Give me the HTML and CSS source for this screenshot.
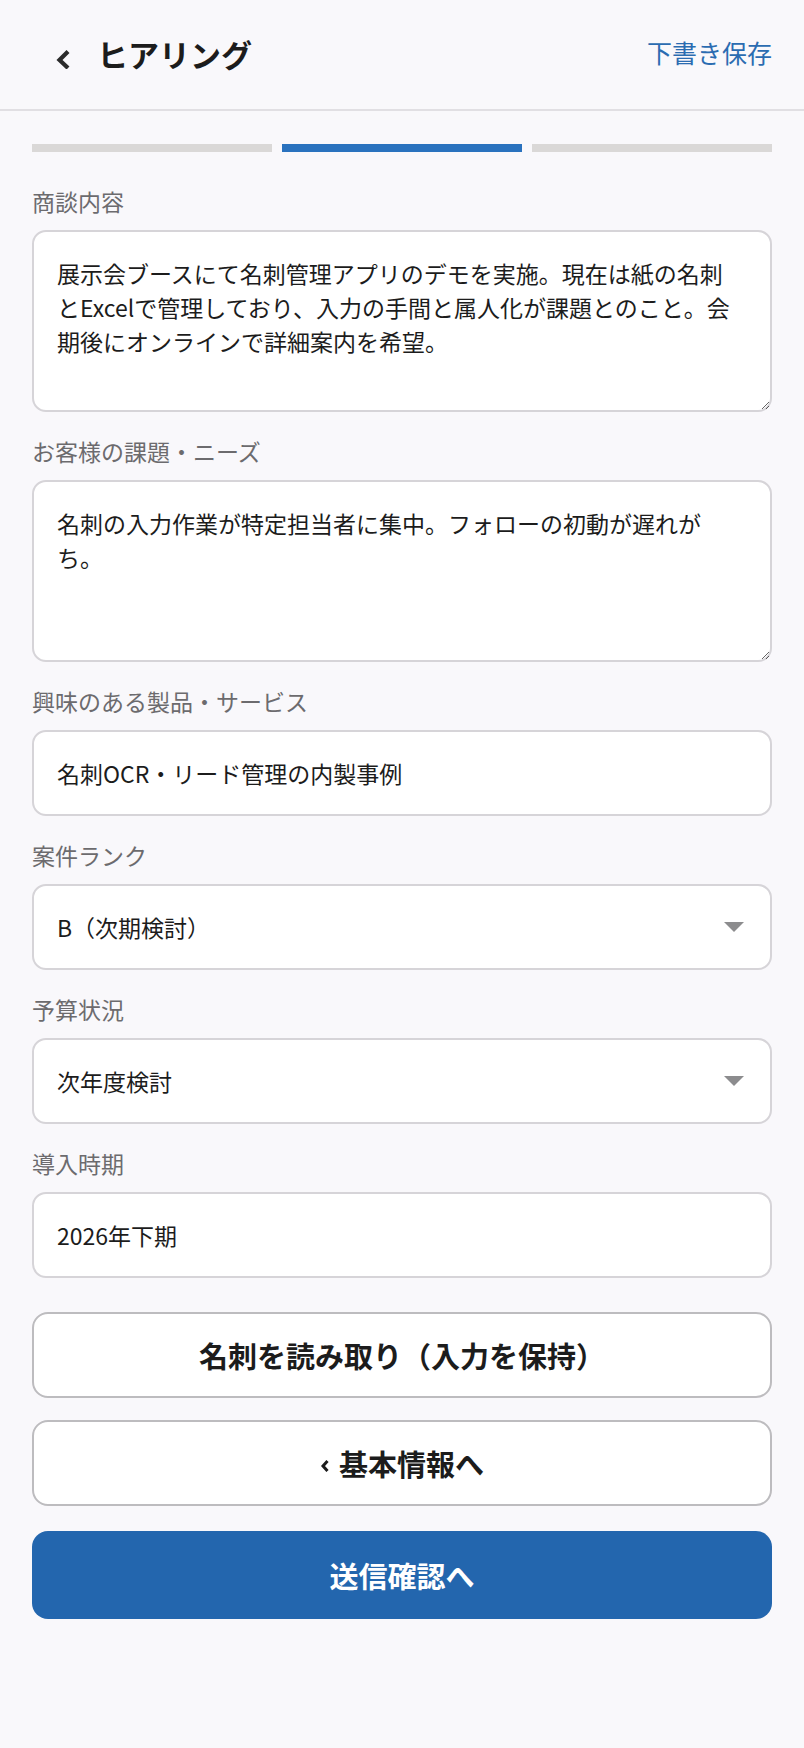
FILE: index.html
```html
<!DOCTYPE html>
<html lang="ja">
<head>
<meta charset="utf-8">
<title>ヒアリング</title>
<link rel="stylesheet" href="styles.css">
</head>
<body>
<header class="topbar">
  <div class="topbar-left">
    <svg class="back-icon" width="17" height="19" viewBox="0 0 17 19" aria-hidden="true">
      <polyline points="13,1.5 4.5,10 13,18" fill="none" stroke="#2b2b2b" stroke-width="4.2" stroke-linejoin="miter"/>
    </svg>
    <h1 class="title">ヒアリング</h1>
  </div>
  <a class="draft-link">下書き保存</a>
</header>

<main class="content">
  <div class="progress">
    <span class="step"></span>
    <span class="step active"></span>
    <span class="step"></span>
  </div>

  <form class="form">
    <div class="field">
      <label class="label">商談内容</label>
      <textarea class="box textarea">展示会ブースにて名刺管理アプリのデモを実施。現在は紙の名刺とExcelで管理しており、入力の手間と属人化が課題とのこと。会期後にオンラインで詳細案内を希望。</textarea>
    </div>
    <div class="field">
      <label class="label">お客様の課題・ニーズ</label>
      <textarea class="box textarea">名刺の入力作業が特定担当者に集中。フォローの初動が遅れがち。</textarea>
    </div>
    <div class="field">
      <label class="label">興味のある製品・サービス</label>
      <div class="box input">名刺OCR・リード管理の内製事例</div>
    </div>
    <div class="field">
      <label class="label">案件ランク</label>
      <div class="box input select"><span>B（次期検討）</span><span class="caret"></span></div>
    </div>
    <div class="field">
      <label class="label">予算状況</label>
      <div class="box input select"><span>次年度検討</span><span class="caret"></span></div>
    </div>
    <div class="field">
      <label class="label">導入時期</label>
      <div class="box input">2026年下期</div>
    </div>
  </form>

  <div class="actions">
    <button class="btn btn-outline" type="button">名刺を読み取り（入力を保持）</button>
    <button class="btn btn-outline" type="button"><svg class="lt" width="10" height="14" viewBox="0 0 10 14" aria-hidden="true"><polyline points="7.5,2 3,7 7.5,12" fill="none" stroke="#1c1c1c" stroke-width="3"/></svg>基本情報へ</button>
    <button class="btn btn-primary" type="button">送信確認へ</button>
  </div>
</main>
</body>
</html>
```

FILE: styles.css
```css
* { box-sizing: border-box; }

html, body {
  margin: 0;
  padding: 0;
}

body {
  background: #f9f8fb;
  font-family: "Noto Sans CJK JP", "Noto Sans", sans-serif;
  color: #1c1c1c;
  width: 804px;
  min-height: 1748px;
}

.topbar {
  height: 111px;
  border-bottom: 2px solid #e1dfe3;
  display: flex;
  align-items: center;
  justify-content: space-between;
  padding: 0 32px 0 55px;
  background: #f9f8fb;
}

.topbar-left {
  display: flex;
  align-items: center;
  gap: 25px;
}

.back-icon {
  margin-top: 10px;
  display: block;
}

.title {
  margin: 0;
  font-size: 31px;
  font-weight: 700;
  line-height: 1;
  margin-top: -2px;
}

.draft-link {
  color: #2b6cb1;
  font-size: 25px;
  line-height: 1;
  margin-top: -4px;
}

.content {
  padding: 0 32px;
}

.progress {
  display: flex;
  gap: 10px;
  margin-top: 33px;
}

.step {
  flex: 1;
  height: 8px;
  background: #dad8d7;
}

.step.active {
  background: #2a72be;
}

.form {
  display: flex;
  flex-direction: column;
  gap: 24px;
  margin: 34px 0 0;
}

.field {
  display: flex;
  flex-direction: column;
  gap: 14px;
}

.label {
  font-size: 23px;
  line-height: 30px;
  color: #6c6b6e;
}

.box {
  width: 100%;
  background: #ffffff;
  border: 2px solid #d6d4d8;
  border-radius: 14px;
  font-family: "Noto Sans CJK JP", "Noto Sans", sans-serif;
  font-size: 23px;
  color: #1c1c1c;
}

.textarea {
  height: 182px;
  padding: 24px 29px 24px 23px;
  line-height: 34px;
  resize: vertical;
  display: block;
  margin: 0;
  outline: none;
}

.input {
  height: 86px;
  padding: 0 23px;
  display: flex;
  align-items: center;
}

.select {
  justify-content: space-between;
  padding-right: 26px;
}

.caret {
  width: 0;
  height: 0;
  border-left: 10px solid transparent;
  border-right: 10px solid transparent;
  border-top: 10px solid #8c8c8e;
}

.actions {
  display: flex;
  flex-direction: column;
  margin-top: 34px;
  gap: 22px;
}

.btn {
  width: 100%;
  height: 86px;
  border-radius: 16px;
  font-family: "Noto Sans CJK JP", "Noto Sans", sans-serif;
  font-size: 29px;
  font-weight: 700;
  cursor: pointer;
  display: flex;
  align-items: center;
  justify-content: center;
  gap: 9px;
}

.btn-outline {
  background: #ffffff;
  border: 2px solid #bdbcbf;
  color: #1c1c1c;
}

.lt {
  display: block;
  margin-top: 5px;
}

.btn-primary {
  margin-top: 3px;
  height: 88px;
  background: #2366ae;
  border: none;
  color: #ffffff;
}
```
